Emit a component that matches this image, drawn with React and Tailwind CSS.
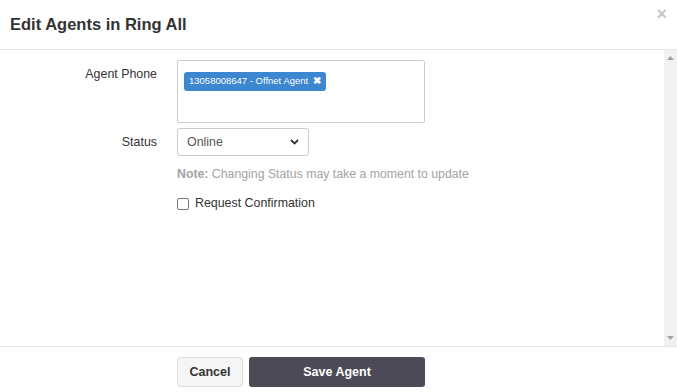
import { useState } from "react";

const App = () => {
  const [status, setStatus] = useState("Online");
  const [confirm, setConfirm] = useState(false);

  return (
    <div className="w-[677px] h-[392px] bg-white overflow-hidden flex flex-col font-['Liberation_Sans',Arial,sans-serif] text-[#333]">
      {/* Header */}
      <div className="h-[50px] shrink-0 flex items-start justify-between border-b border-[#e5e5e5] pl-[10px] pr-[10px]">
        <h1 className="mt-[12px] text-[16.5px] font-bold text-[#333]">Edit Agents in Ring All</h1>
        <button className="mt-[5px] text-[18px] font-bold leading-none text-[#c6c6c6]">×</button>
      </div>

      {/* Body */}
      <div className="flex flex-1 min-h-0">
        <div className="flex-1 pt-[10px]">
          <div className="flex">
            <label className="w-[157px] text-right text-[12.4px] pt-[5px]">Agent Phone</label>
            <div className="ml-[20px] w-[248px] h-[63px] border border-[#ccc] rounded-[2px] p-[6px]">
              <span className="inline-flex items-center h-[19px] px-[5px] rounded-[3px] bg-[#3c87d0] text-white text-[9.5px]">
                13058008647 - Offnet Agent
                <span className="ml-[5px] text-[10px] font-bold leading-none">✖</span>
              </span>
            </div>
          </div>

          <div className="flex mt-[5px]">
            <label className="w-[157px] text-right text-[12.4px] pt-[5px]">Status</label>
            <div className="ml-[20px] relative w-[132px] h-[28px]">
              <select
                value={status}
                onChange={(e) => setStatus(e.target.value)}
                className="appearance-none w-full h-full border border-[#ccc] rounded-[3px] bg-white pl-[9px] text-[12.4px] text-[#555] outline-none"
              >
                <option>Online</option>
                <option>Offline</option>
              </select>
              <svg className="absolute right-[10px] top-[11px] pointer-events-none" width="9" height="6" viewBox="0 0 9 6">
                <path d="M1 1 L4.5 4.5 L8 1" fill="none" stroke="#333" strokeWidth="1.8" />
              </svg>
            </div>
          </div>

          <p className="ml-[177px] mt-[9px] text-[12.3px] text-[#a3a3a3]">
            <span className="font-bold">Note:</span> Changing Status may take a moment to update
          </p>

          <label className="ml-[177px] mt-[11px] flex items-center gap-[6px] text-[12.4px]">
            <input
              type="checkbox"
              checked={confirm}
              onChange={(e) => setConfirm(e.target.checked)}
              className="appearance-none w-[12px] h-[12px] border border-[#777] rounded-[2px] bg-white"
            />
            Request Confirmation
          </label>
        </div>

        {/* scrollbar */}
        <div className="w-[13px] bg-[#f1f1f1] flex flex-col items-center justify-between py-[6px]">
          <svg width="7" height="4" viewBox="0 0 7 4">
            <path d="M0 4 L3.5 0 L7 4 Z" fill="#a3a3a3" />
          </svg>
          <svg width="7" height="4" viewBox="0 0 7 4">
            <path d="M0 0 L3.5 4 L7 0 Z" fill="#a3a3a3" />
          </svg>
        </div>
      </div>

      {/* Footer */}
      <div className="h-[46px] shrink-0 border-t border-[#e5e5e5] flex items-start pt-[10px] pl-[177px] gap-[6px]">
        <button className="w-[66px] h-[30px] rounded-[3px] border border-[#ddd] bg-[#f5f5f5] text-[12.5px] font-bold text-[#333]">
          Cancel
        </button>
        <button className="w-[176px] h-[30px] rounded-[3px] bg-[#4b4a56] text-[12.5px] font-bold text-white">
          Save Agent
        </button>
      </div>
    </div>
  );
};

export default App;
